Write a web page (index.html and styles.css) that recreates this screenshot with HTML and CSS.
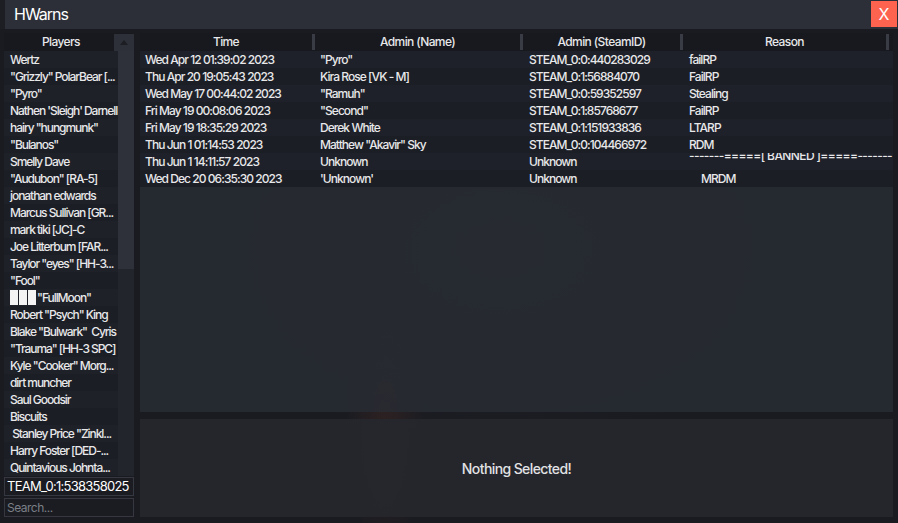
FILE: index.html
```html
<!DOCTYPE html>
<html>
<head>
<meta charset="utf-8">
<link rel="stylesheet" href="styles.css">
</head>
<body>
<div class="window">
  <div class="titlebar">
    <div class="title">HWarns</div>
    <div class="close">X</div>
  </div>
  <div class="content">
    <div class="left">
      <div class="players">
        <div class="plist">
          <div class="phead">Players</div>
          <div class="prows">
            <div class="prow">Wertz</div>
            <div class="prow">"Grizzly" PolarBear [...</div>
            <div class="prow">"Pyro"</div>
            <div class="prow">Nathen 'Sleigh' Darnell</div>
            <div class="prow">hairy "hungmunk"</div>
            <div class="prow">"Bulanos"</div>
            <div class="prow">Smelly Dave</div>
            <div class="prow">"Audubon" [RA-5]</div>
            <div class="prow">jonathan edwards</div>
            <div class="prow">Marcus Sullivan [GR...</div>
            <div class="prow">mark tiki [JC]-C</div>
            <div class="prow">Joe Litterbum [FAR...</div>
            <div class="prow">Taylor "eyes" [HH-3...</div>
            <div class="prow">"Fool"</div>
            <div class="prow"><span class="tofu"></span><span class="tofu"></span><span class="tofu"></span>"FullMoon"</div>
            <div class="prow">Robert "Psych" King</div>
            <div class="prow">Blake "Bulwark"&nbsp; Cyris</div>
            <div class="prow">"Trauma" [HH-3 SPC]</div>
            <div class="prow">Kyle "Cooker" Morg...</div>
            <div class="prow">dirt muncher</div>
            <div class="prow">Saul Goodsir</div>
            <div class="prow">Biscuits</div>
            <div class="prow">&nbsp;Stanley Price "Zinkl...</div>
            <div class="prow">Harry Foster [DED-...</div>
            <div class="prow">Quintavious Johnta...</div>
          </div>
        </div>
        <div class="scroll">
          <div class="sbtn"><span class="arrow"></span></div>
          <div class="strack"><div class="sthumb"></div></div>
        </div>
      </div>
      <div class="field steam">TEAM_0:1:538358025</div>
      <div class="field search">Search...</div>
    </div>
    <div class="right">
      <div class="table">
        <div class="thead">
          <div class="th">Time</div>
          <div class="th">Admin (Name)</div>
          <div class="th">Admin (SteamID)</div>
          <div class="th">Reason</div>
        </div>
        <div class="trow"><div class="td">Wed Apr 12 01:39:02 2023</div><div class="td">"Pyro"</div><div class="td c3">STEAM_0:0:440283029</div><div class="td c3">failRP</div></div>
        <div class="trow"><div class="td">Thu Apr 20 19:05:43 2023</div><div class="td">Kira Rose [VK - M]</div><div class="td c3">STEAM_0:1:56884070</div><div class="td c3">FailRP</div></div>
        <div class="trow"><div class="td">Wed May 17 00:44:02 2023</div><div class="td">"Ramuh"</div><div class="td c3">STEAM_0:0:59352597</div><div class="td c3">Stealing</div></div>
        <div class="trow"><div class="td">Fri May 19 00:08:06 2023</div><div class="td">"Second"</div><div class="td c3">STEAM_0:1:85768677</div><div class="td c3">FailRP</div></div>
        <div class="trow"><div class="td">Fri May 19 18:35:29 2023</div><div class="td">Derek White</div><div class="td c3">STEAM_0:1:151933836</div><div class="td c3">LTARP</div></div>
        <div class="trow"><div class="td">Thu Jun 1 01:14:53 2023</div><div class="td">Matthew "Akavir" Sky</div><div class="td c3">STEAM_0:0:104466972</div><div class="td c3">RDM</div></div>
        <div class="trow"><div class="td">Thu Jun 1 14:11:57 2023</div><div class="td">Unknown</div><div class="td c3">Unknown</div><div class="td c3 wide"><span class="banned">-------=====[ BANNED ]=====-------</span></div></div>
        <div class="trow"><div class="td">Wed Dec 20 06:35:30 2023</div><div class="td">'Unknown'</div><div class="td c3">Unknown</div><div class="td c3 indent">MRDM</div></div>
        <div class="tfill"></div>
      </div>
      <div class="detail">Nothing Selected!</div>
    </div>
  </div>
</div>
</body>
</html>
```
FILE: styles.css
```css
* { box-sizing: border-box; }
html, body {
  margin: 0;
  padding: 0;
}
body {
  width: 898px;
  height: 523px;
  overflow: hidden;
  font-family: Inter, "Noto Sans", sans-serif;
  font-size: 12px;
  color: #e8e8ea;
  background:
    radial-gradient(ellipse 40px 130px at 385px 430px, rgba(120, 55, 35, 0.22), rgba(120, 55, 35, 0) 100%),
    radial-gradient(ellipse 300px 200px at 500px 250px, rgba(60, 60, 70, 0.25), rgba(0, 0, 0, 0) 100%),
    #191b21;
}
.window {
  display: flex;
  flex-direction: column;
  height: 523px;
}
.titlebar {
  height: 29px;
  flex: none;
  display: flex;
  align-items: flex-start;
  justify-content: space-between;
  background: #2c2f37;
  border-left: 5px solid #1c1e24;
}
.title {
  padding-left: 9px;
  font-size: 16px;
  line-height: 29px;
  color: #ffffff;
  letter-spacing: -1px;
}
.close {
  width: 26px;
  height: 26px;
  margin: 1px 1px 0 0;
  background: #fe6350;
  color: #ffffff;
  font-size: 16px;
  line-height: 26px;
  text-align: center;
}
.content {
  flex: 1;
  display: flex;
  gap: 6px;
  padding: 4px 5px 6px 4px;
  min-height: 0;
}
.left {
  width: 130px;
  flex: none;
  display: flex;
  flex-direction: column;
}
.players {
  height: 444px;
  display: flex;
  overflow: hidden;
}
.plist {
  flex: 1;
  min-width: 0;
  display: flex;
  flex-direction: column;
}
.phead {
  height: 18px;
  line-height: 18px;
  text-align: center;
  font-weight: 500;
  background: #17191e;
  letter-spacing: -0.6px;
}
.prows { flex: 1; }
.prow {
  height: 17px;
  line-height: 17px;
  padding-left: 6px;
  white-space: nowrap;
  overflow: hidden;
  letter-spacing: -1.05px;
  font-weight: 500;
  background: #1e2128;
}
.prow:nth-child(even) { background: #1b1e25; }
.tofu {
  display: inline-block;
  width: 8px;
  height: 15px;
  margin-right: 1px;
  vertical-align: -3px;
  background: #f4f4f4;
}
.scroll {
  width: 16px;
  flex: none;
  display: flex;
  flex-direction: column;
  background: #17191e;
}
.sbtn {
  height: 17px;
  margin-top: 1px;
  margin-left: -4px;
  width: 20px;
  background: #2d3038;
  display: flex;
  align-items: center;
  justify-content: center;
}
.arrow {
  width: 0;
  height: 0;
  border-left: 4px solid transparent;
  border-right: 4px solid transparent;
  border-bottom: 5px solid #1c1e24;
}
.strack {
  flex: 1;
  background: #22252c;
}
.sthumb {
  height: 218px;
  background: #2e3139;
}
.field {
  height: 19px;
  line-height: 17px;
  border: 1px solid #353840;
  background: #1a1c22;
  padding-left: 2px;
  white-space: nowrap;
  overflow: hidden;
}
.steam {
  margin-top: 1px;
  font-size: 13px;
  color: #ffffff;
  letter-spacing: -0.75px;
}
.search {
  margin-top: 2px;
  color: #7c7f86;
  font-size: 12px;
  letter-spacing: -0.5px;
}
.right {
  flex: 1;
  display: flex;
  flex-direction: column;
  gap: 7px;
  min-width: 0;
}
.table {
  height: 379px;
  display: flex;
  flex-direction: column;
  background: rgba(40, 43, 50, 0.85);
}
.thead, .trow {
  display: grid;
  grid-template-columns: 175px 208px 160px 206px 1fr;
}
.thead {
  height: 18px;
  background: #17191e;
  padding-top: 1px;
}
.th {
  text-align: center;
  line-height: 16px;
  font-weight: 500;
  letter-spacing: -0.6px;
  border-right: 3px solid #393c44;
  height: 16px;
}
.trow {
  height: 17px;
  line-height: 17px;
  background: #1e2129;
}
.trow:nth-of-type(odd) { background: #1b1e25; }
.td {
  padding-left: 5px;
  white-space: nowrap;
  overflow: hidden;
  font-weight: 500;
  letter-spacing: -0.95px;
}
.c3 { padding-left: 6px; }
.wide {
  grid-column: span 2;
  overflow: hidden;
}
.banned {
  position: relative;
  top: -6px;
  letter-spacing: -0.6px;
}
.indent { padding-left: 18px; }
.tfill { flex: 1; }
.detail {
  flex: 1;
  display: flex;
  align-items: center;
  justify-content: center;
  background: rgba(38, 40, 46, 0.9);
  font-size: 14px;
  font-weight: 500;
  letter-spacing: -0.6px;
  color: #e2e2e4;
}
```
